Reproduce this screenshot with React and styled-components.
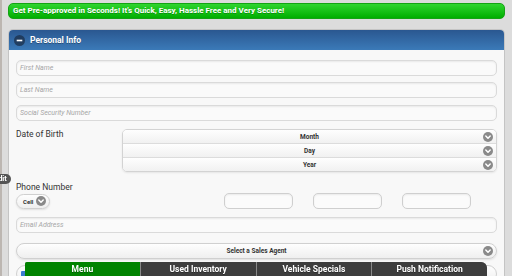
import React from 'react';
import styled, { createGlobalStyle } from 'styled-components';

const GlobalStyle = createGlobalStyle`
  html, body {
    margin: 0;
    padding: 0;
    background: #dcdcdc;
    font-family: Roboto, 'Liberation Sans', sans-serif;
    overflow: hidden;
  }
`;

const Page = styled.div`
  height: 276px;
  box-sizing: border-box;
  border-left: 2px solid #bcb6b1;
  padding: 3px 7px 0 6px;
  overflow: hidden;
`;

const Banner = styled.div`
  height: 16px;
  box-sizing: border-box;
  border: 1px solid #14a314;
  border-radius: 5px;
  background: linear-gradient(#2fd52f, #00ae00);
  color: #fff;
  font-size: 8px;
  font-weight: 700;
  line-height: 14px;
  padding-left: 4px;
  text-shadow: 0 1px 0 rgba(0, 0, 0, 0.25);
  white-space: nowrap;
  margin-bottom: 10px;
`;

const Panel = styled.div`
  border: 1px solid #c4c4c4;
  border-bottom: none;
  border-radius: 5px 5px 0 0;
  background: #f8f8f8;
  height: 260px;
`;

const PanelHeader = styled.div`
  height: 20px;
  display: flex;
  align-items: center;
  gap: 5px;
  padding-left: 5px;
  border-radius: 4px 4px 0 0;
  background: linear-gradient(#2a5790, #3b7ab8);
  color: #fff;
  font-size: 8.5px;
  font-weight: 700;
  text-shadow: 0 1px 0 rgba(0, 0, 0, 0.3);
`;

const Form = styled.div`
  display: flex;
  flex-direction: column;
  padding: 10px 7px 0 7px;
`;

const Field = styled.div`
  margin-top: ${(p) => p.$top || 0}px;
`;

const TextInput = styled.div`
  height: 16px;
  box-sizing: border-box;
  width: ${(p) => (p.$width ? `${p.$width}px` : 'auto')};
  border: 1px solid #dadada;
  border-radius: 5px;
  background: #fafafa;
  box-shadow: inset 0 1px 2px rgba(0, 0, 0, 0.07);
  color: #a6a6a6;
  font-size: 7px;
  font-style: italic;
  line-height: 14px;
  padding-left: 3px;
`;

const Label = styled.div`
  font-size: 8.5px;
  color: #333;
  line-height: 10px;
`;

const DateRow = styled.div`
  display: grid;
  grid-template-columns: 106px 1fr;
  align-items: start;
`;

const SelectGroup = styled.div`
  border: 1px solid #d3d3d3;
  border-radius: 5px;
  overflow: hidden;
  box-shadow: 0 1px 2px rgba(0, 0, 0, 0.08);
`;

const SelectRow = styled.div`
  position: relative;
  height: 13px;
  display: flex;
  align-items: center;
  justify-content: center;
  background: linear-gradient(#fefefe, #f1f1f1);
  border-top: ${(p) => (p.$first ? 'none' : '1px solid #dcdcdc')};
  font-size: 6.5px;
  font-weight: 700;
  color: #333;

  svg {
    position: absolute;
    right: 3px;
    top: 50%;
    margin-top: -5px;
  }
`;

const PhoneRow = styled.div`
  display: flex;
  align-items: center;
  margin-top: 1px;
`;

const CellButton = styled.div`
  height: 15px;
  width: 34px;
  box-sizing: border-box;
  border: 1px solid #d0d0d0;
  border-radius: 8px;
  background: linear-gradient(#fefefe, #efefef);
  box-shadow: 0 1px 2px rgba(0, 0, 0, 0.1);
  display: flex;
  align-items: center;
  gap: 3px;
  padding-left: 6px;
  font-size: 6px;
  font-weight: 700;
  color: #333;
`;

const PhoneInputs = styled.div`
  display: flex;
  gap: 20px;
  margin-left: auto;
  margin-right: 26px;

  ${TextInput} {
    border-color: #cfcfcf;
    background: #fbfbfb;
  }
`;

const PillSelect = styled.div`
  position: relative;
  height: 16px;
  box-sizing: border-box;
  border: 1px solid #d0d0d0;
  border-radius: 8px;
  background: linear-gradient(#fefefe, #efefef);
  box-shadow: 0 1px 2px rgba(0, 0, 0, 0.1);
  display: flex;
  align-items: center;
  justify-content: center;
  font-size: 6.5px;
  font-weight: 700;
  color: #333;

  svg {
    position: absolute;
    right: 3px;
    top: 50%;
    margin-top: -5px;
  }
`;

const CheckRow = styled.div`
  height: 18px;
  box-sizing: border-box;
  border: 1px solid #d0d0d0;
  border-radius: 9px;
  background: linear-gradient(#fefefe, #efefef);
  display: flex;
  align-items: center;
  padding-left: 4px;
`;

const CheckBox = styled.div`
  width: 7px;
  height: 7px;
  border-radius: 1px;
  background: #3b7bd0;
`;

const EditTab = styled.div`
  position: fixed;
  left: -11px;
  top: 174px;
  height: 10px;
  padding: 0 4px 0 5px;
  border-radius: 5px;
  background: #555;
  color: #fff;
  font-size: 7.5px;
  font-weight: 700;
  line-height: 10px;
`;

const NavBar = styled.nav`
  position: fixed;
  left: 25px;
  bottom: 0;
  width: 462px;
  height: 14px;
  display: grid;
  grid-template-columns: repeat(4, 1fr);
  gap: 1px;
  background: #888;
  border-radius: 2px 6px 0 0;
  overflow: hidden;
`;

const NavItem = styled.div`
  background: ${(p) => (p.$active ? '#008300' : '#3d3d3d')};
  color: #fff;
  font-size: 8.5px;
  font-weight: 700;
  line-height: 14px;
  text-align: center;
  text-shadow: 0 1px 0 rgba(0, 0, 0, 0.3);
`;

const Chevron = () => (
  <svg width="10" height="10" viewBox="0 0 10 10">
    <circle cx="5" cy="5" r="5" fill="#8a8a8a" />
    <path d="M2.8 4 L5 6.2 L7.2 4" fill="none" stroke="#fff" strokeWidth="1.5" strokeLinecap="round" strokeLinejoin="round" />
  </svg>
);

const MinusIcon = () => (
  <svg width="11" height="11" viewBox="0 0 11 11">
    <circle cx="5.5" cy="5.5" r="5.5" fill="#1b2f4a" fillOpacity="0.75" />
    <rect x="2.7" y="4.7" width="5.6" height="1.6" fill="#fff" />
  </svg>
);

export default function App() {
  return (
    <>
      <GlobalStyle />
      <Page>
        <Banner>Get Pre-approved in Seconds! It's Quick, Easy, Hassle Free and Very Secure!</Banner>
        <Panel>
          <PanelHeader>
            <MinusIcon />
            Personal Info
          </PanelHeader>
          <Form>
            <TextInput>First Name</TextInput>
            <Field $top={6}>
              <TextInput>Last Name</TextInput>
            </Field>
            <Field $top={7}>
              <TextInput>Social Security Number</TextInput>
            </Field>
            <Field $top={8}>
              <DateRow>
                <Label>Date of Birth</Label>
                <SelectGroup>
                  <SelectRow $first>
                    Month
                    <Chevron />
                  </SelectRow>
                  <SelectRow>
                    Day
                    <Chevron />
                  </SelectRow>
                  <SelectRow>
                    Year
                    <Chevron />
                  </SelectRow>
                </SelectGroup>
              </DateRow>
            </Field>
            <Field $top={10}>
              <Label>Phone Number</Label>
              <PhoneRow>
                <CellButton>
                  Cell
                  <Chevron />
                </CellButton>
                <PhoneInputs>
                  <TextInput $width={69} />
                  <TextInput $width={69} />
                  <TextInput $width={69} />
                </PhoneInputs>
              </PhoneRow>
            </Field>
            <Field $top={8}>
              <TextInput>Email Address</TextInput>
            </Field>
            <Field $top={10}>
              <PillSelect>
                Select a Sales Agent
                <Chevron />
              </PillSelect>
            </Field>
            <Field $top={6}>
              <CheckRow>
                <CheckBox />
              </CheckRow>
            </Field>
          </Form>
        </Panel>
      </Page>
      <EditTab>Edit</EditTab>
      <NavBar>
        <NavItem $active>Menu</NavItem>
        <NavItem>Used Inventory</NavItem>
        <NavItem>Vehicle Specials</NavItem>
        <NavItem>Push Notification</NavItem>
      </NavBar>
    </>
  );
}
